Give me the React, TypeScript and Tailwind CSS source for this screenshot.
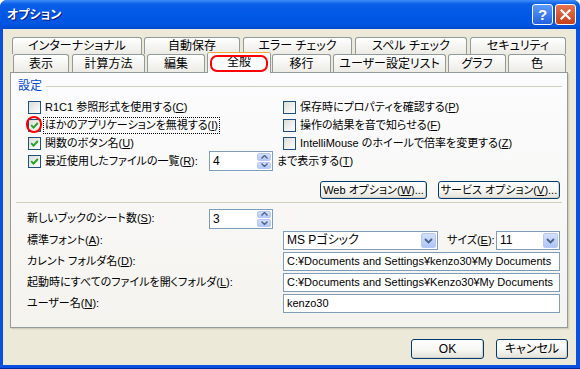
import React from "react";

function CheckBox({ checked }: { checked?: boolean }) {
  return (
    <span className="w-[13px] h-[13px] shrink-0 border border-[#1C5180] bg-linear-to-br from-[#DCDCD7] to-white flex items-center justify-center">
      {checked && (
        <svg width="9" height="9" viewBox="0 0 9 9">
          <path d="M1.2 4.2 L3.5 6.6 L7.8 2" stroke="#21A121" strokeWidth="1.9" fill="none" />
        </svg>
      )}
    </span>
  );
}

function CheckRow({ checked, focused, children }: { checked?: boolean; focused?: boolean; children: React.ReactNode }) {
  return (
    <div className="flex items-center gap-[2px] h-[18px]">
      <CheckBox checked={checked} />
      <span
        className={
          "h-[17px] px-[1px] leading-[15px] border whitespace-nowrap " +
          (focused ? "border-dotted border-black" : "border-transparent")
        }
      >
        {children}
      </span>
    </div>
  );
}

function SpinArrows() {
  return (
    <div className="w-[15px] h-full flex flex-col gap-[1px] p-[1px] pl-0">
      <div className="flex-1 rounded-[2px] bg-linear-to-b from-[#D3DFFC] to-[#B1C8F8] border border-[#B6C9F3] flex items-center justify-center">
        <svg width="7" height="4" viewBox="0 0 7 4">
          <path d="M0.5 3.5 L3.5 0.5 L6.5 3.5" stroke="#4D6185" strokeWidth="1.4" fill="none" />
        </svg>
      </div>
      <div className="flex-1 rounded-[2px] bg-linear-to-b from-[#D3DFFC] to-[#B1C8F8] border border-[#B6C9F3] flex items-center justify-center">
        <svg width="7" height="4" viewBox="0 0 7 4">
          <path d="M0.5 0.5 L3.5 3.5 L6.5 0.5" stroke="#4D6185" strokeWidth="1.4" fill="none" />
        </svg>
      </div>
    </div>
  );
}

function Spin({ value }: { value: string }) {
  return (
    <div className="w-[64px] h-[20px] shrink-0 border border-[#7F9DB9] bg-white flex items-stretch">
      <span className="flex-1 pl-[3px] leading-[18px] text-[12px]">{value}</span>
      <SpinArrows />
    </div>
  );
}

function Combo({ value, w }: { value: string; w: string }) {
  return (
    <div className={"h-[19px] shrink-0 border border-[#7F9DB9] bg-white flex items-stretch " + w}>
      <span className="flex-1 pl-[3px] leading-[17px] text-[12px] whitespace-nowrap overflow-hidden">{value}</span>
      <div className="w-[17px] p-[1px]">
        <div className="h-full rounded-[2px] bg-linear-to-b from-[#D3DFFC] to-[#AEC6F7] border border-[#B6C9F3] flex items-center justify-center">
          <svg width="9" height="6" viewBox="0 0 9 6">
            <path d="M1 1 L4.5 4.5 L8 1" stroke="#4D6185" strokeWidth="1.8" fill="none" />
          </svg>
        </div>
      </div>
    </div>
  );
}

function TextBox({ value }: { value: string }) {
  return (
    <div className="w-[277px] h-[19px] shrink-0 border border-[#7F9DB9] bg-white pl-[3px] leading-[17px] text-[11px] whitespace-nowrap overflow-hidden">
      {value}
    </div>
  );
}

function XPButton({ w, h, children }: { w: string; h: string; children: React.ReactNode }) {
  return (
    <div
      className={
        "shrink-0 border border-[#003C74] rounded-[3px] bg-linear-to-b from-white via-[#F7F7F4] to-[#E3E1D8] shadow-[inset_-1px_-1px_0_#D6D0C5] flex items-center justify-center whitespace-nowrap " +
        w +
        " " +
        h
      }
    >
      {children}
    </div>
  );
}

function Tab({ label, cls }: { label: string; cls: string }) {
  return (
    <div
      className={
        "h-full shrink-0 border border-b-0 border-[#919B9C] rounded-t-[3px] bg-linear-to-b from-white to-[#ECEBE5] flex items-center justify-center whitespace-nowrap text-[12px] " +
        cls
      }
    >
      {label}
    </div>
  );
}

function Tabs() {
  return (
    <div className="h-[35px] flex flex-col">
      <div className="h-[17px] flex">
        <Tab label="インターナショナル" cls="ml-[2px] w-[130px]" />
        <Tab label="自動保存" cls="ml-[2px] w-[96px]" />
        <Tab label="エラー チェック" cls="ml-[3px] w-[109px]" />
        <Tab label="スペル チェック" cls="ml-[3px] w-[112px]" />
        <Tab label="セキュリティ" cls="ml-[3px] w-[96px]" />
      </div>
      <div className="h-[18px] flex items-start relative z-10">
        <Tab label="表示" cls="ml-[3px] w-[56px]" />
        <Tab label="計算方法" cls="ml-[3px] w-[73px]" />
        <Tab label="編集" cls="ml-[2px] w-[58px]" />
        <div className="ml-[2px] w-[64px] h-[21px] -mt-[2px] shrink-0 flex flex-col border-x border-[#919B9C] bg-[#FCFCFE] rounded-t-[3px] overflow-hidden text-[12px]">
          <div className="h-[3px] bg-linear-to-b from-[#E68B2C] to-[#FFC73C]" />
          <div className="flex-1 flex items-center justify-center pb-[2px]">全般</div>
        </div>
        <Tab label="移行" cls="ml-[1px] w-[59px]" />
        <Tab label="ユーザー設定リスト" cls="ml-[2px] w-[113px]" />
        <Tab label="グラフ" cls="ml-[2px] w-[58px]" />
        <Tab label="色" cls="ml-[2px] w-[58px]" />
      </div>
    </div>
  );
}

function Panel() {
  return (
    <div className="h-[256px] shrink-0 border border-[#919B9C] bg-linear-to-b from-[#FCFCFE] to-[#F4F3EE] shadow-[1px_1px_0_#D3CFBF,2px_2px_0_#E2DFD0]">
      <div className="mx-[5px] pt-[7px] pb-[3px] border-b border-[#D0D0BF]">
        <div className="flex items-center h-[13px]">
          <span className="pl-[2px] pr-[4px] leading-[13px] text-[12px] text-[#0046D5]">設定</span>
          <div className="flex-1 h-px bg-[#D0D0BF]" />
        </div>
        <div className="mt-[5px] pl-[12px] flex flex-col">
          <div className="flex">
            <div className="w-[255px] shrink-0 flex flex-col">
              <CheckRow>
                R1C1 参照形式を使用する(<u>C</u>)
              </CheckRow>
              <CheckRow checked focused>
                ほかのアプリケーションを無視する(<u>I</u>)
              </CheckRow>
              <CheckRow checked>
                関数のボタン名(<u>U</u>)
              </CheckRow>
            </div>
            <div className="flex flex-col">
              <CheckRow>
                保存時にプロパティを確認する(<u>P</u>)
              </CheckRow>
              <CheckRow>
                操作の結果を音で知らせる(<u>F</u>)
              </CheckRow>
              <CheckRow>
                IntelliMouse のホイールで倍率を変更する(<u>Z</u>)
              </CheckRow>
            </div>
          </div>
          <div className="flex items-center h-[20px] -mt-[1px]">
            <CheckBox checked />
            <span className="w-[168px] pl-[4px] whitespace-nowrap">
              最近使用したファイルの一覧(<u>R</u>):
            </span>
            <Spin value="4" />
            <span className="pl-[4px] whitespace-nowrap">
              まで表示する(<u>T</u>)
            </span>
          </div>
        </div>
        <div className="mt-[10px] pr-[2px] flex justify-end gap-[11px]">
          <XPButton w="w-[107px]" h="h-[18px]">
            Web オプション(<u>W</u>)...
          </XPButton>
          <XPButton w="w-[122px]" h="h-[18px]">
            サービス オプション(<u>V</u>)...
          </XPButton>
        </div>
      </div>
      <div className="pl-[16px] mt-[6px] w-[549px] flex flex-col gap-[2px]">
        <div className="flex items-center h-[19px] mb-[1px]">
          <span className="w-[182px] shrink-0 whitespace-nowrap">
            新しいブックのシート数(<u>S</u>):
          </span>
          <Spin value="3" />
        </div>
        <div className="flex items-center h-[19px]">
          <span className="w-[256px] shrink-0 whitespace-nowrap">
            標準フォント(<u>A</u>):
          </span>
          <Combo value="MS Pゴシック" w="w-[155px]" />
          <span className="flex-1 pl-[9px] whitespace-nowrap">
            サイズ(<u>E</u>):
          </span>
          <Combo value="11" w="w-[64px]" />
        </div>
        <div className="flex items-center h-[19px]">
          <span className="w-[256px] shrink-0 whitespace-nowrap">
            カレント フォルダ名(<u>D</u>):
          </span>
          <TextBox value="C:¥Documents and Settings¥kenzo30¥My Documents" />
        </div>
        <div className="flex items-center h-[19px]">
          <span className="w-[256px] shrink-0 whitespace-nowrap">
            起動時にすべてのファイルを開くフォルダ(<u>L</u>):
          </span>
          <TextBox value="C:¥Documents and Settings¥Kenzo30¥My Documents" />
        </div>
        <div className="flex items-center h-[19px]">
          <span className="w-[256px] shrink-0 whitespace-nowrap">
            ユーザー名(<u>N</u>):
          </span>
          <TextBox value="kenzo30" />
        </div>
      </div>
    </div>
  );
}

function TitleBar() {
  return (
    <div className="h-[29px] shrink-0 flex items-center pl-[7px] pr-[4px] bg-[linear-gradient(to_bottom,#3F8CF7_0%,#0A5FE8_14%,#0058E6_50%,#0055E0_85%,#0049CF_100%)]">
      <span className="flex-1 text-white font-bold text-[12px] [text-shadow:1px_1px_0_#0A1883]">オプション</span>
      <div className="w-[21px] h-[21px] rounded-[3px] border border-white bg-linear-to-b from-[#5F9BFA] to-[#2360E0] flex items-center justify-center text-white font-bold text-[15px] leading-none">
        ?
      </div>
      <div className="ml-[2px] w-[21px] h-[21px] rounded-[3px] border border-white bg-linear-to-b from-[#E9744F] to-[#C5401A] flex items-center justify-center">
        <svg width="11" height="11" viewBox="0 0 11 11">
          <path d="M1.5 1.5 L9.5 9.5 M9.5 1.5 L1.5 9.5" stroke="white" strokeWidth="2.2" strokeLinecap="square" />
        </svg>
      </div>
    </div>
  );
}

export default function App() {
  return (
    <div className="w-[580px] h-[369px] bg-white text-black text-[11px] [font-family:'Liberation_Sans','Noto_Sans_CJK_JP',sans-serif] [font-feature-settings:'palt']">
      <div className="relative w-[580px] h-[369px] flex flex-col rounded-t-[7px] overflow-hidden bg-[#0A50E0] border-b border-b-[#002A9E]">
        <TitleBar />
        <div className="flex-1 ml-[3px] mr-[4px] mb-[3px] bg-[#ECE9D8] pt-[8px] pl-[7px] pr-[8px] flex flex-col">
          <Tabs />
          <Panel />
          <div className="flex justify-end gap-[12px] mt-[11px] text-[12px]">
            <XPButton w="w-[73px]" h="h-[20px]">
              OK
            </XPButton>
            <XPButton w="w-[72px]" h="h-[20px]">
              キャンセル
            </XPButton>
          </div>
        </div>
        <div className="absolute left-[210px] top-[55px] w-[58px] h-[17px] border-2 border-[#FF0000] rounded-[7px] z-20" />
        <div className="absolute left-[26px] top-[116px] w-[16px] h-[17px] border-2 border-[#FF0000] rounded-full z-20" />
      </div>
    </div>
  );
}
